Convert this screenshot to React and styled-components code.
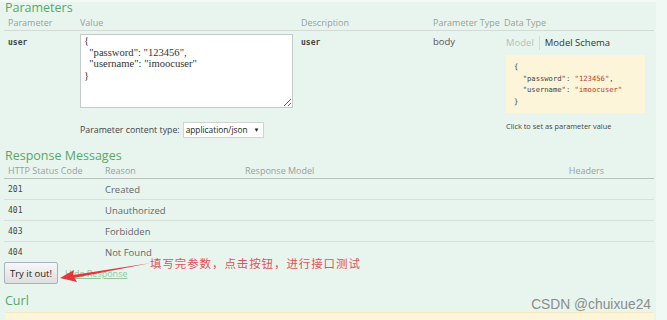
import React from "react";
import styled, { createGlobalStyle } from "styled-components";

const GlobalStyle = createGlobalStyle`
  html, body {
    margin: 0;
    padding: 0;
    background: #f1f9f5;
    font-family: "Open Sans", "Noto Sans", sans-serif;
    overflow: hidden;
  }
`;

const Page = styled.div`
  position: relative;
  width: 656px;
  height: 320px;
  background: #e8f5ee;
  border-top: 2px solid #f3faf6;
  box-sizing: border-box;
  overflow: hidden;
`;

const Content = styled.div`
  padding: 0 2px 0 4px;
`;

const Heading = styled.h4`
  margin: ${(p) => p.$mt || "0"} 0 0 1px;
  font-size: 12.5px;
  line-height: 14px;
  font-weight: 400;
  color: #56a769;
`;

const Grid = styled.div`
  display: grid;
  grid-template-columns: ${(p) => p.$cols};
`;

const HeadCell = styled.div`
  padding: 0 4px;
  font-size: 9px;
  line-height: 15px;
  white-space: nowrap;
  color: #9a9f9c;
  border-bottom: 1px solid ${(p) => p.$dark ? "#b9c1bd" : "#d2dbd6"};
  text-align: ${(p) => p.$right ? "right" : "left"};
  padding-right: ${(p) => p.$right ? "50px" : "4px"};
`;

const Cell = styled.div`
  padding: ${(p) => p.$pad || "4px 4px 0"};
  font-size: 9.5px;
  line-height: 14px;
  color: #555;
  min-width: 0;
`;

const Mono = styled.span`
  font-family: "DejaVu Sans Mono", monospace;
  font-size: 8px;
  font-weight: ${(p) => p.$bold ? 700 : 400};
  color: #444;
`;

const Textarea = styled.textarea`
  display: block;
  box-sizing: border-box;
  width: 213px;
  height: 74px;
  margin: 0;
  padding: 0 3px;
  border: 1px solid #c5cbc8;
  background: #fff;
  font-family: "Liberation Serif", serif;
  font-size: 10.6px;
  line-height: 11.7px;
  color: #333;
  resize: both;
  overflow: hidden;
`;

const ContentType = styled.div`
  display: flex;
  align-items: center;
  gap: 3px;
  margin-top: 14px;
  font-size: 8.8px;
  color: #444;
`;

const Select = styled.div`
  display: flex;
  align-items: center;
  gap: 6px;
  height: 14px;
  padding: 0 4px 0 2px;
  background: #fff;
  border: 1px solid #cfd4d1;
  font-size: 8.3px;
  color: #222;
  & span {
    font-size: 6px;
  }
`;

const Tabs = styled.div`
  display: flex;
  gap: 5px;
  font-size: 9.5px;
  padding-left: 2px;
  margin-top: 1px;
  color: #333;
`;

const Tab = styled.span`
  color: ${(p) => p.$muted ? "#b7bdba" : "#333"};
  padding-right: ${(p) => p.$muted ? "5px" : "0"};
  border-right: ${(p) => p.$muted ? "1px solid #d5dad7" : "none"};
`;

const Schema = styled.pre`
  margin: 5px 5px 0 2px;
  padding: 6px 8px 5px;
  background: #fcf5d9;
  font-family: "DejaVu Sans Mono", monospace;
  font-size: 7.2px;
  line-height: 11.7px;
  color: #444;
  & b {
    font-weight: 400;
    color: #c0392b;
  }
`;

const Hint = styled.div`
  margin: 6px 0 0 2px;
  font-size: 7.4px;
  color: #444;
`;

const Row = styled.div`
  display: contents;
  & > div {
    height: 20px;
    padding: 0 4px;
    display: flex;
    align-items: center;
    border-bottom: ${(p) => p.$last ? "none" : "1px solid #d6dfda"};
    font-size: 9.5px;
    color: #666;
  }
`;

const Actions = styled.div`
  display: flex;
  align-items: center;
  gap: 7px;
`;

const Button = styled.button`
  width: 54px;
  height: 22px;
  padding: 0;
  border: 1px solid #a9b2c0;
  border-radius: 2px;
  background: linear-gradient(#f7f7f7, #dedede);
  font-family: "Open Sans", sans-serif;
  font-size: 9.5px;
  color: #222;
`;

const HideLink = styled.span`
  font-size: 9px;
  color: #8fc79a;
  text-decoration: underline;
`;

const CurlBox = styled.div`
  margin: 4px 0 0 1px;
  height: 12px;
  background: #fcf5d9;
  border-top: 1px solid #f3e9c2;
`;

const Note = styled.div`
  position: absolute;
  left: 150px;
  top: 253px;
  font-family: "Noto Sans CJK SC", sans-serif;
  font-size: 11.5px;
  color: #e2515b;
  letter-spacing: 0.9px;
`;

const Arrow = styled.svg`
  position: absolute;
  left: 58px;
  top: 255px;
`;

const Watermark = styled.div`
  position: absolute;
  right: 5px;
  top: 295px;
  font-family: "Liberation Sans", Arial, sans-serif;
  font-size: 13.8px;
  color: #8a8d8b;
`;

const paramCols = "72px 221px 132px 71px 1fr";
const respCols = "97px 140px 300px 1fr";

const responses = [
  ["201", "Created"],
  ["401", "Unauthorized"],
  ["403", "Forbidden"],
  ["404", "Not Found"],
];

export default function App() {
  return (
    <Page>
      <GlobalStyle />
      <Content>
        <Heading $mt="-1px">Parameters</Heading>
        <Grid $cols={paramCols}>
          <HeadCell>Parameter</HeadCell>
          <HeadCell>Value</HeadCell>
          <HeadCell>Description</HeadCell>
          <HeadCell>Parameter Type</HeadCell>
          <HeadCell>Data Type</HeadCell>

          <Cell><Mono $bold>user</Mono></Cell>
          <Cell $pad="3px 4px 0">
            <Textarea
              readOnly
              defaultValue={'{\n  "password": "123456",\n  "username": "imoocuser"\n}'}
            />
            <ContentType>
              Parameter content type:
              <Select>application/json <span>▼</span></Select>
            </ContentType>
          </Cell>
          <Cell><Mono $bold>user</Mono></Cell>
          <Cell>body</Cell>
          <Cell $pad="4px 4px 0">
            <Tabs>
              <Tab $muted>Model</Tab>
              <Tab>Model Schema</Tab>
            </Tabs>
            <Schema>
              {"{\n  "}"password": <b>"123456"</b>,{"\n  "}"username": <b>"imoocuser"</b>{"\n}"}
            </Schema>
            <Hint>Click to set as parameter value</Hint>
          </Cell>
        </Grid>

        <Heading $mt="11px">Response Messages</Heading>
        <Grid $cols={respCols}>
          <HeadCell $dark>HTTP Status Code</HeadCell>
          <HeadCell $dark>Reason</HeadCell>
          <HeadCell $dark>Response Model</HeadCell>
          <HeadCell $dark $right>Headers</HeadCell>
          {responses.map(([code, reason], i) => (
            <Row key={code} $last={i === responses.length - 1}>
              <div><Mono>{code}</Mono></div>
              <div>{reason}</div>
              <div />
              <div />
            </Row>
          ))}
        </Grid>

        <Actions>
          <Button>Try it out!</Button>
          <HideLink>Hide Response</HideLink>
        </Actions>

        <Heading $mt="10px">Curl</Heading>
        <CurlBox />
      </Content>

      <Arrow width="96" height="26" viewBox="0 0 96 26">
        <path d="M93 6 L12 18.5 L13 21.5 Z" fill="#e8343d" />
        <path d="M2 21 L16 13 L15 18 L19 25 Z" fill="#e8343d" />
      </Arrow>
      <Note>填写完参数，点击按钮，进行接口测试</Note>
      <Watermark>CSDN @chuixue24</Watermark>
    </Page>
  );
}
